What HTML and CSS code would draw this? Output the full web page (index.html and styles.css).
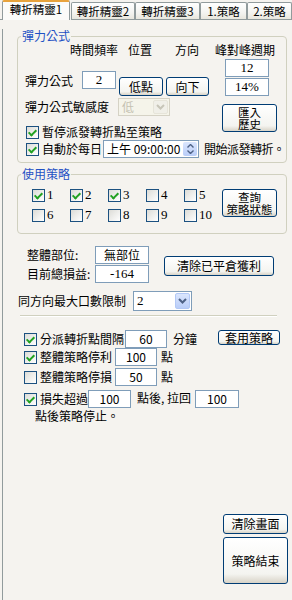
FILE: index.html
```html
<!DOCTYPE html>
<html lang="zh-Hant">
<head>
<meta charset="UTF-8">
<title>轉折精靈</title>
<link rel="stylesheet" href="styles.css">
</head>
<body>
<div class="tabs">
    <div class="tab-gap"></div>
    <div class="tab active">轉折精靈1</div>
    <div class="tab t2">轉折精靈2</div>
    <div class="tab t3">轉折精靈3</div>
    <div class="tab t4">1.策略</div>
    <div class="tab t5">2.策略</div>
    <div class="tab-fill"></div>
</div>

<div class="panel">
    <fieldset class="grp grp-formula">
        <legend>彈力公式</legend>
        <div class="hdr">
            <span class="h1">時間頻率</span>
            <span class="h2">位置</span>
            <span class="h3">方向</span>
            <span>峰對峰週期</span>
        </div>
        <div class="formula">
            <span class="formula-lbl">彈力公式</span>
            <div class="tb tb-freq serif">2</div>
            <div class="btn btn-low">低點</div>
            <div class="btn btn-dir">向下</div>
            <div class="peak">
                <div class="tb serif">12</div>
                <div class="tb serif">14%</div>
            </div>
        </div>
        <div class="mid">
            <div class="mid-left">
                <div class="sens">
                    <span class="sens-lbl">彈力公式敏感度</span>
                    <div class="dd dd-off">
                        <span class="dd-val">低</span>
                        <span class="dd-btn"><svg width="9" height="6" viewBox="0 0 9 6"><path d="M1 1l3.5 3.5L8 1" fill="none" stroke="#c7c5b8" stroke-width="2"/></svg></span>
                    </div>
                </div>
                <div class="chk-row">
                    <span class="cb on"></span>
                    <span>暫停派發轉折點至策略</span>
                </div>
            </div>
            <div class="btn btn-two btn-import"><span>匯入</span><span>歷史</span></div>
        </div>
        <div class="auto">
            <span class="cb on"></span>
            <span class="auto-lbl">自動於每日</span>
            <div class="time">
                <span class="time-val">上午 09:00:00</span>
                <span class="spin">
                    <svg width="7" height="4" viewBox="0 0 7 4"><path d="M0.5 3.5l3-3 3 3" fill="none" stroke="#4d6185" stroke-width="1.4"/></svg>
                    <svg width="7" height="4" viewBox="0 0 7 4"><path d="M0.5 0.5l3 3 3-3" fill="none" stroke="#4d6185" stroke-width="1.4"/></svg>
                </span>
            </div>
            <span class="auto-end">開始派發轉折。</span>
        </div>
    </fieldset>

    <fieldset class="grp grp-strat">
        <legend>使用策略</legend>
        <div class="strat">
            <div class="strat-grid">
                <label class="strat-item"><span class="cb on"></span><span class="serif">1</span></label>
                <label class="strat-item"><span class="cb on"></span><span class="serif">2</span></label>
                <label class="strat-item"><span class="cb on"></span><span class="serif">3</span></label>
                <label class="strat-item"><span class="cb"></span><span class="serif">4</span></label>
                <label class="strat-item"><span class="cb"></span><span class="serif">5</span></label>
                <label class="strat-item"><span class="cb"></span><span class="serif">6</span></label>
                <label class="strat-item"><span class="cb"></span><span class="serif">7</span></label>
                <label class="strat-item"><span class="cb"></span><span class="serif">8</span></label>
                <label class="strat-item"><span class="cb"></span><span class="serif">9</span></label>
                <label class="strat-item"><span class="cb"></span><span class="serif">10</span></label>
            </div>
            <div class="btn btn-two btn-query"><span>查詢</span><span>策略狀態</span></div>
        </div>
    </fieldset>

    <div class="pos">
        <div class="pos-grid">
            <span class="pos-lbl">整體部位:</span>
            <div class="tb">無部位</div>
            <span class="pos-lbl">目前總損益:</span>
            <div class="tb serif">-164</div>
        </div>
        <div class="btn btn-clear">清除已平倉獲利</div>
    </div>

    <div class="limit">
        <span>同方向最大口數限制</span>
        <div class="dd dd-limit">
            <span class="dd-val serif">2</span>
            <span class="dd-btn"><svg width="9" height="6" viewBox="0 0 9 6"><path d="M1 1l3.5 3.5L8 1" fill="none" stroke="#4d6185" stroke-width="2"/></svg></span>
        </div>
    </div>

    <div class="sep"></div>

    <div class="opt opt-1">
        <span class="cb on"></span>
        <span class="opt-lbl">分派轉折點間隔</span>
        <div class="tb tb-num">60</div>
        <span class="unit unit-min">分鐘</span>
        <div class="btn btn-apply">套用策略</div>
    </div>
    <div class="opt opt-2">
        <span class="cb on"></span>
        <span class="opt-lbl">整體策略停利</span>
        <div class="tb tb-num tb-gap">100</div>
        <span class="unit">點</span>
    </div>
    <div class="opt opt-3">
        <span class="cb"></span>
        <span class="opt-lbl">整體策略停損</span>
        <div class="tb tb-num tb-gap">50</div>
        <span class="unit">點</span>
    </div>
    <div class="opt opt-4">
        <span class="cb on"></span>
        <span class="opt-lbl">損失超過</span>
        <div class="tb tb-loss">100</div>
        <span class="unit unit-back">點後, 拉回</span>
        <div class="tb tb-back">100</div>
    </div>
    <div class="opt-tail">點後策略停止。</div>

    <div class="end">
        <div class="btn btn-wipe">清除畫面</div>
        <div class="btn btn-stop">策略結束</div>
    </div>
</div>
</body>
</html>
```

FILE: styles.css
```css
body{
    margin: 0;
    background-color: #f5f3ef;
    font-family: "Noto Sans CJK TC", "Liberation Sans", sans-serif;
    font-size: 12px;
    line-height: 14px;
    color: #000;
    white-space: nowrap;
}
.serif{
    font-family: "Liberation Serif", "Noto Sans CJK TC", serif;
    font-size: 13px;
}

/* tabs */
.tabs{
    display: flex;
    height: 20px;
    font-size: 11.5px;
}
.tab-gap{
    width: 2px;
    border-bottom: 1px solid #919b9c;
}
.tab-fill{
    flex: 1;
    border-bottom: 1px solid #919b9c;
}
.tab{
    box-sizing: border-box;
    height: 18px;
    margin-top: 2px;
    border: 1px solid #919b9c;
    border-bottom: none;
    border-radius: 2px 2px 0 0;
    background: linear-gradient(#ffffff, #f3f3ef 60%, #e6e4da);
    text-align: center;
    line-height: 16px;
    box-shadow: inset 0 -1px 0 #919b9c;
    overflow: hidden;
}
.tab.active{
    width: 68px;
    height: 20px;
    margin-top: 0;
    border-top: 2px solid #e8a33c;
    background: #fbfbf9;
    box-shadow: none;
    line-height: 15px;
}
.t2{ width: 64px; margin-left: 1px; }
.t3{ width: 65px; }
.t4{ width: 47px; }
.t5{ width: 45px; }

.panel{
    margin-left: 2px;
    border-left: 1px solid #919b9c;
    height: 580px;
}

/* group boxes */
.grp{
    box-sizing: border-box;
    width: 270px;
    min-width: 0;
    margin: 9px 0 0 14px;
    padding: 0 0 4px 0;
    border: 1px solid #d0d0bf;
    border-radius: 4px;
}
.grp legend{
    margin-left: 3px;
    padding: 0 1px;
    color: #1f51c4;
    line-height: 14px;
}
.grp-strat{
    margin-top: 4px;
    padding-bottom: 11px;
}

.tb{
    box-sizing: border-box;
    height: 18px;
    border: 1px solid #7f9db9;
    background-color: #fff;
    text-align: center;
    line-height: 16px;
}
.btn{
    box-sizing: border-box;
    border: 1px solid #003c74;
    border-radius: 3px;
    background: linear-gradient(#ffffff, #f4f4f0 80%, #d8d3c7);
    text-align: center;
    line-height: 12px;
}
.btn-two{
    display: flex;
    flex-direction: column;
    justify-content: center;
    font-size: 11.5px;
    line-height: 12px;
}
.cb{
    box-sizing: border-box;
    display: block;
    flex: none;
    width: 13px;
    height: 13px;
    border: 1px solid #1c5180;
    background: linear-gradient(135deg, #dcdcd7, #ffffff);
}
.cb.on::after{
    content: "";
    display: block;
    width: 3px;
    height: 6px;
    margin: 1px 0 0 3px;
    border: solid #21a121;
    border-width: 0 2px 2px 0;
    transform: rotate(45deg);
}

.dd{
    box-sizing: border-box;
    display: flex;
    height: 18px;
    border: 1px solid #7f9db9;
    background-color: #fff;
}
.dd-val{
    flex: 1;
    padding-left: 3px;
    line-height: 16px;
}
.dd-btn{
    display: flex;
    width: 15px;
    margin: 1px;
    align-items: center;
    justify-content: center;
    border-radius: 2px;
    background: linear-gradient(#dbe6fd, #b9cdf8);
    border: 1px solid #b2c8f6;
    box-sizing: border-box;
}
.dd-off{
    width: 52px;
    border-color: #d5d2c5;
    background-color: #f5f4ea;
}
.dd-off .dd-val{
    color: #c5c2b2;
}
.dd-off .dd-btn{
    background: #f0efe8;
    border-color: #e6e4d9;
}

/* formula group */
.hdr{
    display: flex;
    height: 14px;
    padding-left: 52px;
}
.h1{ width: 58px; }
.h2{ width: 47px; }
.h3{ width: 40px; }

.formula{
    display: flex;
    align-items: flex-start;
    height: 37px;
    margin-top: 2px;
    padding-left: 7px;
}
.formula-lbl{
    width: 57px;
    margin-top: 15px;
}
.tb-freq{
    width: 34px;
    margin-top: 12px;
}
.btn-low, .btn-dir{
    height: 19px;
    margin-top: 18px;
    line-height: 17px;
}
.btn-low{
    width: 44px;
    margin-left: 3px;
}
.btn-dir{
    width: 43px;
    margin-left: 3px;
}
.peak{
    display: flex;
    flex-direction: column;
    gap: 1px;
    width: 44px;
    margin-left: 16px;
}

.mid{
    display: flex;
}
.mid-left{
    width: 204px;
}
.sens{
    display: flex;
    align-items: center;
    height: 18px;
    margin-top: 2px;
    padding-left: 7px;
}
.sens-lbl{
    width: 93px;
}
.chk-row{
    display: flex;
    align-items: center;
    gap: 3px;
    height: 14px;
    margin-top: 9px;
    padding-left: 8px;
}
.btn-import{
    width: 55px;
    height: 28px;
    margin-top: 8px;
}

.auto{
    display: flex;
    align-items: center;
    height: 18px;
    margin-top: 1px;
    padding-left: 8px;
}
.auto-lbl{
    margin-left: 3px;
}
.time{
    box-sizing: border-box;
    display: flex;
    flex: none;
    width: 96px;
    height: 18px;
    margin-left: 1px;
    border: 1px solid #7f9db9;
    background-color: #fff;
}
.time-val{
    flex: 1;
    padding-left: 3px;
    line-height: 16px;
}
.spin{
    display: flex;
    flex-direction: column;
    justify-content: center;
    align-items: center;
    gap: 2px;
    width: 14px;
    margin: 1px;
    border-radius: 2px;
    background: linear-gradient(#dbe6fd, #b9cdf8);
}
.auto-end{
    margin-left: 5px;
    letter-spacing: -0.5px;
}

/* strategies group */
.strat{
    display: flex;
    padding-left: 14px;
}
.strat-grid{
    display: grid;
    grid-template-columns: repeat(5, 38px);
    row-gap: 6px;
    margin-top: 7px;
}
.strat-item{
    display: flex;
    align-items: center;
    gap: 2px;
    height: 14px;
}
.btn-query{
    width: 55px;
    height: 28px;
    margin-top: 8px;
}

/* position */
.pos{
    display: flex;
    align-items: flex-start;
    margin-top: 12px;
    padding-left: 24px;
}
.pos-grid{
    display: grid;
    grid-template-columns: 68px 54px;
    row-gap: 1px;
    align-items: center;
}
.btn-clear{
    width: 110px;
    height: 20px;
    margin: 10px 0 0 15px;
    line-height: 18px;
}

.limit{
    display: flex;
    align-items: center;
    height: 20px;
    margin-top: 8px;
    padding-left: 15px;
}
.dd-limit{
    width: 59px;
    height: 20px;
    margin-left: 7px;
}
.dd-limit .dd-val{
    line-height: 18px;
}

.sep{
    width: 257px;
    margin: 4px 0 0 17px;
    border-top: 1px solid #d0d0bf;
    border-bottom: 1px solid #fff;
}

/* options */
.opt{
    display: flex;
    align-items: center;
    height: 18px;
    padding-left: 21px;
}
.opt-1{ margin-top: 13px; }
.opt-3{ margin-top: 2px; }
.opt-4{ margin-top: 4px; }
.opt-lbl{
    margin-left: 3px;
}
.tb-num{
    width: 42px;
    margin-left: 1px;
}
.tb-gap{
    margin-left: 3px;
}
.unit{
    margin-left: 4px;
    align-self: flex-start;
    margin-top: 2px;
}
.unit-min{
    margin-left: 6px;
}
.btn-apply{
    width: 62px;
    height: 15px;
    margin-left: 21px;
    align-self: flex-start;
    line-height: 13px;
}
.tb-loss{
    width: 43px;
}
.unit-back{
    margin-left: 6px;
    margin-top: 1px;
}
.tb-back{
    width: 44px;
    margin-left: 4px;
}
.opt-tail{
    margin-top: 1px;
    padding-left: 32px;
}

.end{
    display: flex;
    flex-direction: column;
    align-items: flex-end;
    gap: 3px;
    margin-top: 91px;
    padding-right: 4px;
}
.btn-wipe{
    width: 65px;
    height: 20px;
    line-height: 18px;
}
.btn-stop{
    width: 65px;
    height: 47px;
    line-height: 45px;
}
```
